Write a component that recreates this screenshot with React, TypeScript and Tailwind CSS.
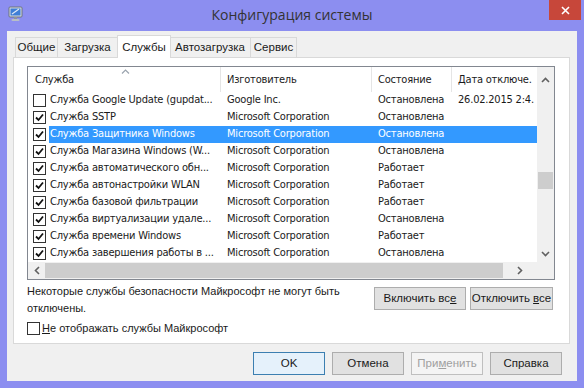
import React from 'react'

type Row = { name: string; maker: string; state: string; date?: string; on: boolean; sel?: boolean }

const ROWS: Row[] = [
  { name: 'Служба Google Update (gupdat...', maker: 'Google Inc.', state: 'Остановлена', date: '26.02.2015 2:4.', on: false },
  { name: 'Служба SSTP', maker: 'Microsoft Corporation', state: 'Остановлена', on: true },
  { name: 'Служба Защитника Windows', maker: 'Microsoft Corporation', state: 'Остановлена', on: true, sel: true },
  { name: 'Служба Магазина Windows (W...', maker: 'Microsoft Corporation', state: 'Остановлена', on: true },
  { name: 'Служба автоматического обн...', maker: 'Microsoft Corporation', state: 'Работает', on: true },
  { name: 'Служба автонастройки WLAN', maker: 'Microsoft Corporation', state: 'Работает', on: true },
  { name: 'Служба базовой фильтрации', maker: 'Microsoft Corporation', state: 'Работает', on: true },
  { name: 'Служба виртуализации удале...', maker: 'Microsoft Corporation', state: 'Остановлена', on: true },
  { name: 'Служба времени Windows', maker: 'Microsoft Corporation', state: 'Работает', on: true },
  { name: 'Служба завершения работы в ...', maker: 'Microsoft Corporation', state: 'Остановлена', on: true },
]

const TABS = [
  { label: 'Общие', w: 'w-[43px]' },
  { label: 'Загрузка', w: 'w-[61px]' },
  { label: 'Службы', w: 'w-[54px]', active: true },
  { label: 'Автозагрузка', w: 'w-[82px]' },
  { label: 'Сервис', w: 'w-[47px]' },
]

function Check({ on }: { on: boolean }) {
  return (
    <span className="w-[13px] h-[13px] border border-[#333] bg-white flex items-center justify-center shrink-0">
      {on && (
        <svg width="9" height="9" viewBox="0 0 9 9">
          <path d="M1 4.5 L3.5 7 L8 1.5" fill="none" stroke="#111" strokeWidth="1.8" />
        </svg>
      )}
    </span>
  )
}

function Btn({ children, w, primary, disabled }: { children: React.ReactNode; w: string; primary?: boolean; disabled?: boolean }) {
  return (
    <div
      className={`${w} h-[23px] flex items-center justify-center border text-[11.5px] whitespace-nowrap ${
        primary ? 'border-[#3c7fb1] bg-[#e5f1fb]' : disabled ? 'border-[#bfbfbf] bg-[#f4f4f4]' : 'border-[#adadad] bg-[#e1e1e1]'
      } ${disabled ? 'text-[#a0a0a0]' : 'text-[#1a1a1a]'}`}
    >
      <span>{children}</span>
    </div>
  )
}

export default function App() {
  return (
    <div className="w-[584px] h-[388px] bg-[#8c8ef0] flex flex-col font-['Liberation_Sans','Noto_Sans',sans-serif] text-[#1a1a1a]">
      {/* заголовок */}
      <div className="h-[31px] grid grid-cols-[1fr_auto_1fr] items-start">
        <div className="pl-[8px] pt-[6px]">
          <svg width="17" height="17" viewBox="0 0 17 17">
            <rect x="1" y="1" width="13" height="10" rx="1" fill="#d8dde4" stroke="#6b7480" />
            <rect x="2.5" y="2.5" width="10" height="7" fill="#3f7fd6" />
            <path d="M4 8 L11 3" stroke="#dfe9f7" strokeWidth="1.2" />
            <rect x="6" y="11" width="3" height="2" fill="#8d949c" />
            <rect x="3.5" y="13" width="8" height="2" rx="1" fill="#b8bec6" />
          </svg>
        </div>
        <div className="pt-[4px] text-[14px] text-[#333] font-['Open_Sans','Noto_Sans',sans-serif]">Конфигурация системы</div>
        <div className="flex justify-end pr-[3px]">
          <div className="w-[32px] h-[20px] bg-[#c7473a] flex items-center justify-center">
            <svg width="9" height="9" viewBox="0 0 9 9">
              <path d="M1 1 L8 8 M8 1 L1 8" stroke="#fff" strokeWidth="1.6" />
            </svg>
          </div>
        </div>
      </div>

      {/* клиентская область */}
      <div className="mx-[7px] h-[350px] bg-[#f0f0f0] flex flex-col pl-[6px] pr-[7px]">
        {/* вкладки */}
        <div className="flex items-end pl-[2px] pt-[3px] h-[26px]">
          {TABS.map((t) =>
            t.active ? (
              <div
                key={t.label}
                className={`${t.w} h-[23px] -mx-[1px] -mb-[1px] relative z-10 bg-white border border-b-0 border-[#d9d9d9] flex justify-center pt-[3px] text-[11.5px]`}
              >
                {t.label}
              </div>
            ) : (
              <div
                key={t.label}
                className={`${t.w} h-[20px] bg-[#f0f0f0] border border-[#d9d9d9] border-b-0 -ml-px first:ml-0 flex items-center justify-center text-[11.5px]`}
              >
                {t.label}
              </div>
            )
          )}
        </div>

        {/* панель */}
        <div className="h-[287px] bg-white border border-[#d9d9d9] px-[13px] pt-[8px] flex flex-col">
          {/* список */}
          <div className="w-[528px] h-[214px] border border-[#828790] flex flex-col font-['DejaVu_Sans_Condensed','DejaVu_Sans',sans-serif] text-[11px] tracking-[-0.2px]">
            <div className="flex h-[195px]">
              <div className="w-[509px] flex flex-col">
                <div className="h-[25px] grid grid-cols-[193px_151px_80px_85px] relative">
                  <div className="pl-[7px] pt-[2px] flex items-center border-r border-[#e5e5e5]">Служба</div>
                  <div className="pl-[6px] pt-[2px] flex items-center border-r border-[#e5e5e5]">Изготовитель</div>
                  <div className="pl-[6px] pt-[2px] flex items-center border-r border-[#e5e5e5]">Состояние</div>
                  <div className="pl-[6px] pt-[2px] flex items-center whitespace-nowrap overflow-hidden">Дата отключе.</div>
                  <svg className="absolute left-[93px] top-[2px]" width="9" height="5" viewBox="0 0 9 5">
                    <path d="M1 4.5 L4.5 1 L8 4.5" fill="none" stroke="#9aa3ae" strokeWidth="1.2" />
                  </svg>
                </div>
                {ROWS.map((r) => (
                  <div key={r.name} className="h-[17px] grid grid-cols-[193px_151px_80px_85px] items-center">
                    <div className="flex items-center h-full pl-[5px]">
                      <Check on={r.on} />
                      <span
                        className={`ml-[3px] pl-[1px] h-full flex items-center flex-1 whitespace-nowrap overflow-hidden ${
                          r.sel ? 'bg-[#3399ff] text-white' : ''
                        }`}
                      >
                        {r.name}
                      </span>
                    </div>
                    {[r.maker, r.state, r.date ?? ''].map((c, i) => (
                      <div
                        key={i}
                        className={`h-full flex items-center pl-[6px] whitespace-nowrap overflow-hidden ${
                          r.sel ? 'bg-[#3399ff] text-white' : ''
                        }`}
                      >
                        {c}
                      </div>
                    ))}
                  </div>
                ))}
              </div>
              {/* вертикальная прокрутка */}
              <div className="w-[17px] bg-[#f0f0f0] flex flex-col items-center">
                <div className="h-[17px] flex items-center justify-center mt-[4px]">
                  <svg width="9" height="6" viewBox="0 0 9 6">
                    <path d="M1 5 L4.5 1.5 L8 5" fill="none" stroke="#606060" strokeWidth="1.6" />
                  </svg>
                </div>
                <div className="h-[84px]" />
                <div className="w-[15px] h-[17px] bg-[#cdcdcd]" />
                <div className="flex-1" />
                <div className="h-[17px] flex items-center justify-center">
                  <svg width="9" height="6" viewBox="0 0 9 6">
                    <path d="M1 1 L4.5 4.5 L8 1" fill="none" stroke="#606060" strokeWidth="1.6" />
                  </svg>
                </div>
              </div>
            </div>
            {/* горизонтальная прокрутка */}
            <div className="flex h-[17px] bg-[#f0f0f0]">
              <div className="w-[17px] flex items-center justify-center">
                <svg width="6" height="9" viewBox="0 0 6 9">
                  <path d="M5 1 L1.5 4.5 L5 8" fill="none" stroke="#606060" strokeWidth="1.6" />
                </svg>
              </div>
              <div className="w-[458px] h-[15px] mt-px bg-[#cdcdcd]" />
              <div className="flex-1 flex items-center justify-center">
                <svg width="6" height="9" viewBox="0 0 6 9">
                  <path d="M1 1 L4.5 4.5 L1 8" fill="none" stroke="#606060" strokeWidth="1.6" />
                </svg>
              </div>
              <div className="w-[17px]" />
            </div>
          </div>

          {/* пояснение и кнопки */}
          <div className="flex justify-between mt-[3px] w-[528px]">
            <div className="text-[11px] leading-[17px] w-[330px]">
              Некоторые службы безопасности Майкрософт не могут быть отключены.
            </div>
            <div className="flex gap-[4px] pt-[4px] pr-[2px]">
              <Btn w="w-[92px]">
                Включить вс<u>е</u>
              </Btn>
              <Btn w="w-[83px]">
                Отключить <u>в</u>се
              </Btn>
            </div>
          </div>
          <div className="flex items-center mt-[3px] text-[11px]">
            <Check on={false} />
            <span className="ml-[2px]">
              <u>Н</u>е отображать службы Майкрософт
            </span>
          </div>
        </div>

        {/* нижние кнопки */}
        <div className="flex justify-end gap-[7px] mt-[8px] pr-[8px]">
          <Btn w="w-[72px]" primary>
            OK
          </Btn>
          <Btn w="w-[72px]">Отмена</Btn>
          <Btn w="w-[72px]" disabled>
            При<u>м</u>енить
          </Btn>
          <Btn w="w-[72px]">Справка</Btn>
        </div>
      </div>
    </div>
  )
}
